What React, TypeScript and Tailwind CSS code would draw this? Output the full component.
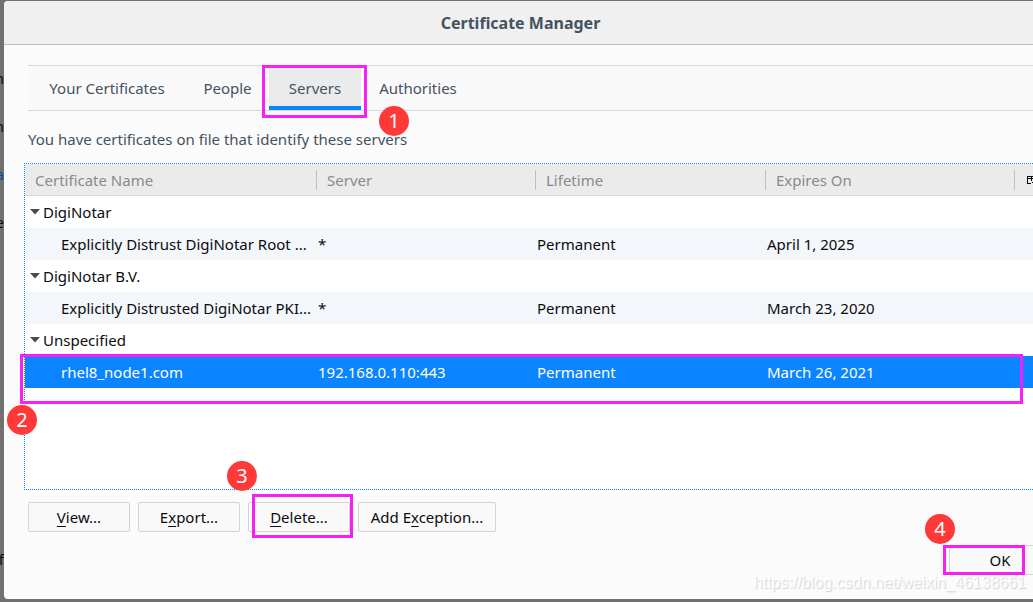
import type { ReactNode } from "react";

const tabs = [
  { label: "Your Certificates", width: "w-[158px]" },
  { label: "People", width: "w-[83px]" },
  { label: "Servers", width: "w-[92px]", selected: true },
  { label: "Authorities", width: "w-[114px]" },
];

const groups = [
  {
    name: "DigiNotar",
    cert: { name: "Explicitly Distrust DigiNotar Root ...", server: "*", expires: "April 1, 2025" },
  },
  {
    name: "DigiNotar B.V.",
    cert: { name: "Explicitly Distrusted DigiNotar PKI...", server: "*", expires: "March 23, 2020" },
  },
  {
    name: "Unspecified",
    cert: { name: "rhel8_node1.com", server: "192.168.0.110:443", expires: "March 26, 2021", selected: true },
  },
];

const headers = ["Certificate Name", "Server", "Lifetime", "Expires On"];

// Numbered step marker, placed by its caller
function Badge({ n, className }: { n: number; className: string }) {
  return (
    <span
      className={`absolute z-20 flex h-[30px] w-[30px] items-center justify-center rounded-full bg-[#ff3838] text-xl leading-none text-white ${className}`}
    >
      {n}
    </span>
  );
}

function Highlight({ className }: { className: string }) {
  return <span className={`pointer-events-none absolute z-10 border-[3px] border-[#f81ef8] ${className}`} />;
}

function Button({ width, children }: { width: string; children: ReactNode }) {
  return (
    <button
      type="button"
      className={`h-[30px] rounded-xs border border-[#d4d4d6] bg-[#f9f9fa] text-center whitespace-nowrap text-[#0c0c0d] ${width}`}
    >
      {children}
    </button>
  );
}

function Key({ children }: { children: ReactNode }) {
  return <span className="underline underline-offset-3">{children}</span>;
}

export default function App() {
  return (
    <div className="flex min-h-screen overflow-hidden bg-[#737170] pt-px pb-[3px] font-['Noto_Sans',sans-serif] text-[15px] leading-6">
      {/* Page behind the dialog */}
      <div className="flex w-1 shrink-0 flex-col items-end gap-6 overflow-hidden pt-[65px] text-[#0c0c0d]">
        <span>n</span>
        <span>n</span>
        <span className="text-[#064f91]">va</span>
        <span>e</span>
        <span className="mt-auto mb-7">f</span>
      </div>

      <main className="relative flex min-w-0 flex-1 flex-col overflow-hidden rounded-l-sm bg-[#fbfbfb] text-[#45525f]">
        <h1 className="flex h-11 items-center justify-center border-b border-[#bebebe] bg-[#f0f0f0] pl-1 text-base font-bold">
          Certificate Manager
        </h1>

        <div className="flex flex-1 flex-col pt-5 pl-5">
          <div role="tablist" className="ml-1 flex h-[46px] border-y border-[#d7d7db] bg-[#f9f9f9]">
            {tabs.map(({ label, width, selected }) => (
              <div key={label} className={`relative flex ${width}`}>
                <button
                  type="button"
                  role="tab"
                  aria-selected={!!selected}
                  className={`flex-1 border-b-4 pt-1 ${selected ? "border-[#0a84ff] bg-[#ebebeb]" : "border-transparent"}`}
                >
                  {label}
                </button>
                {selected && (
                  <>
                    <Highlight className="-top-px -left-[7px] h-[53px] w-[105px]" />
                    <Badge n={1} className="top-10 left-[110px]" />
                  </>
                )}
              </div>
            ))}
          </div>

          <p className="ml-1 pt-4 pb-3">You have certificates on file that identify these servers</p>

          <div className="relative min-h-[327px] flex-1 border-y border-l border-dotted border-[#0a84ff] bg-white">
            <table className="w-full table-fixed text-left text-[#0c0c0d]">
              <colgroup>
                <col className="w-[292px]" />
                <col className="w-[219px]" />
                <col className="w-[230px]" />
                <col />
                <col className="w-[18px]" />
              </colgroup>
              <thead>
                <tr className="h-8 bg-[#ebebeb] text-[#8a8a8a] shadow-[inset_0_-1px_#d7d7db]">
                  {headers.map((header) => (
                    <th key={header} scope="col" className="p-0 font-normal">
                      <span className="flex h-5 items-center border-r border-[#c0c0c0] pl-[10px]">{header}</span>
                    </th>
                  ))}
                  <td className="p-0 pl-3">
                    <button type="button" aria-label="Choose columns" className="block w-1.5 overflow-hidden">
                      <svg width="12" height="9" viewBox="0 0 12 9" fill="none" stroke="#0c0c0d" shapeRendering="crispEdges">
                        <path d="M4 7.5H.5v-7h10V4M0 2.5h10M4.5 1v4M5 6.5h2" />
                      </svg>
                    </button>
                  </td>
                </tr>
              </thead>
              {groups.map(({ name, cert }) => (
                <tbody key={name}>
                  <tr className="h-8">
                    <th scope="rowgroup" colSpan={5} className="p-0 pl-[5px] font-normal">
                      <span className="flex items-center gap-[3px]">
                        <svg width="10" height="6" viewBox="0 0 10 6" fill="#4a4a4a">
                          <path d="M0 0h10L5 5.5z" />
                        </svg>
                        {name}
                      </span>
                    </th>
                  </tr>
                  <tr className={`h-8 ${cert.selected ? "bg-[#0a84ff] text-white" : "bg-[#f3f6fb]"}`}>
                    <td className="p-0 pl-9 whitespace-nowrap">{cert.name}</td>
                    <td className="p-0 pl-px">{cert.server}</td>
                    <td className="p-0 pl-px">Permanent</td>
                    <td className="p-0 pl-px">{cert.expires}</td>
                    <td className="p-0" />
                  </tr>
                </tbody>
              ))}
            </table>
            <Highlight className="top-[190px] right-[10px] -left-[5px] h-[50px]" />
            <Badge n={2} className="top-[241px] -left-[18px]" />
          </div>

          <div className="mt-3 ml-1 flex gap-2">
            <Button width="w-[102px]"><Key>V</Key>iew...</Button>
            <Button width="w-[102px]">E<Key>x</Key>port...</Button>
            <div className="relative flex">
              <Button width="w-[102px]"><Key>D</Key>elete...</Button>
              <Highlight className="-top-2 left-1 h-11 w-[101px]" />
              <Badge n={3} className="-top-[41px] -left-[21px]" />
            </div>
            <Button width="w-[138px]">Add E<Key>x</Key>ception...</Button>
          </div>

          <div className="mt-[13px] -mr-[18px] mb-6 flex justify-end">
            <div className="relative flex">
              <Button width="w-[102px]">OK</Button>
              <Highlight className="top-0 -left-[6px] h-[30px] w-[82px]" />
              <Badge n={4} className="-top-[31px] -left-6" />
            </div>
          </div>
        </div>

        <span className="absolute right-[7px] bottom-1 font-['Liberation_Sans',sans-serif] text-base text-white/80 [text-shadow:1px_1px_1px_#d0d0d0]">
          https://blog.csdn.net/weixin_46138661
        </span>
      </main>
    </div>
  );
}
